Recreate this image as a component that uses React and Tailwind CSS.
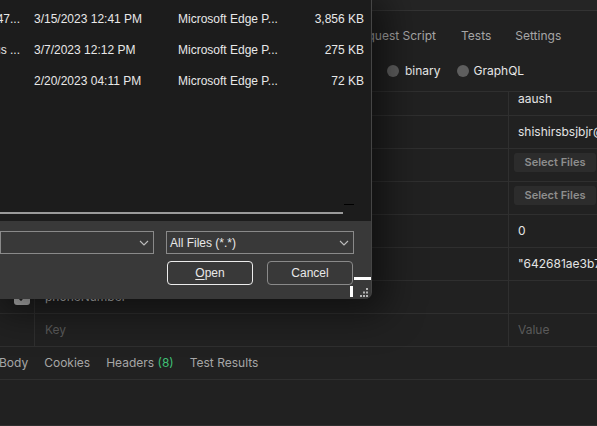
const files = [
  { name: "ashish_resume_v2_final 2023-03-15 1247...", date: "3/15/2023 12:41 PM", type: "Microsoft Edge P...", size: "3,856 KB" },
  { name: "Internship offer letter status ...", date: "3/7/2023 12:12 PM", type: "Microsoft Edge P...", size: "275 KB" },
  { name: "", date: "2/20/2023 04:11 PM", type: "Microsoft Edge P...", size: "72 KB" },
];

function Chevron() {
  return (
    <svg width="10" height="6" viewBox="0 0 10 6" fill="none">
      <path d="M1 1l4 4 4-4" stroke="#bdbdbd" strokeWidth="1.1" />
    </svg>
  );
}

function Grip() {
  return (
    <svg width="10" height="10" viewBox="0 0 10 10" fill="#b5b5b5">
      <rect x="7" y="0" width="2" height="2" />
      <rect x="4" y="3.5" width="2" height="2" />
      <rect x="7" y="3.5" width="2" height="2" />
      <rect x="1" y="7" width="2" height="2" />
      <rect x="4" y="7" width="2" height="2" />
      <rect x="7" y="7" width="2" height="2" />
    </svg>
  );
}

function Row({ h = "h-[33px]", check, keyCell, value, top }) {
  return (
    <div className={`grid grid-cols-[35px_474px_88px] border-b border-[#2f2f2f] ${h}`}>
      <div className="flex items-center border-r border-[#2f2f2f] pl-[14px]">{check}</div>
      <div className="flex items-center border-r border-[#2f2f2f] pl-[10px]">{keyCell}</div>
      <div
        className={
          top
            ? "flex items-start overflow-hidden whitespace-nowrap pt-[4px]"
            : "flex items-center overflow-hidden whitespace-nowrap"
        }
      >
        {value}
      </div>
    </div>
  );
}

function SelectFiles() {
  return (
    <div className="ml-[5px] flex h-[19px] w-[82px] shrink-0 items-center justify-center rounded-[3px] bg-[#2c2c2c] text-[11px] font-semibold text-[#8e8e8e]">
      Select Files
    </div>
  );
}

function PostmanPane() {
  return (
    <div className="text-[12px] text-[#e4e4e4]">
      <div className="h-[11px] border-b border-[#333333] bg-[#252525]" />

      {/* request tabs */}
      <div className="flex h-[49px] items-center whitespace-nowrap text-[#a6a6a6]">
        <div className="flex w-[436px] justify-end overflow-hidden">
          <span className="shrink-0">Pre-request Script</span>
        </div>
        <span className="ml-[25px]">Tests</span>
        <span className="ml-[24px]">Settings</span>
      </div>

      {/* body types */}
      <div className="flex h-[22px] items-center pl-[387px] whitespace-nowrap">
        <span className="h-[12px] w-[12px] rounded-full bg-[#5e5e5e]" />
        <span className="ml-[6px] text-[#e6e6e6]">binary</span>
        <span className="ml-[16px] h-[12px] w-[12px] rounded-full bg-[#5e5e5e]" />
        <span className="ml-[5px] text-[#e6e6e6]">GraphQL</span>
      </div>
      <div className="h-[9px]" />

      {/* form-data table */}
      <div className="border-t border-[#2f2f2f]">
        <div className="grid h-[24px] grid-cols-[35px_474px_88px] border-b border-[#2f2f2f]">
          <div className="border-r border-[#2f2f2f]" />
          <div className="border-r border-[#2f2f2f]" />
          <div className="pl-[9px] leading-[14px]">aaush</div>
        </div>
        <Row value={<span className="pl-[9px]">shishirsbsjbjr@gmail.com</span>} />
        <Row top value={<SelectFiles />} />
        <Row top value={<SelectFiles />} />
        <Row value={<span className="pl-[9px]">0</span>} />
        <Row value={<span className="pl-[9px]">"642681ae3b7c1f0d9a2e4b10"</span>} />
        <Row
          check={
            <span className="flex h-[16px] w-[16px] items-center justify-center rounded-[3px] bg-[#b9b9b9]">
              <svg width="10" height="8" viewBox="0 0 10 8" fill="none">
                <path d="M1 4l3 3 5-6" stroke="#2a2a2a" strokeWidth="1.6" />
              </svg>
            </span>
          }
          keyCell={<span className="text-[#bdbdbd]">phoneNumber</span>}
        />
        <Row
          keyCell={<span className="text-[#5a5a5a]">Key</span>}
          value={<span className="pl-[9px] text-[#5a5a5a]">Value</span>}
        />
      </div>

      {/* response tabs */}
      <div className="flex h-[33px] items-center gap-[16px] border-b border-[#2f2f2f] whitespace-nowrap text-[#a6a6a6]">
        <span className="-ml-[1px]">Body</span>
        <span>Cookies</span>
        <span>
          Headers <span className="text-[#3fbf74]">(8)</span>
        </span>
        <span>Test Results</span>
      </div>
      <div className="h-[46px] border-b border-[#2f2f2f]" />
    </div>
  );
}

function FileDialog() {
  return (
    <div className="absolute left-0 top-0 flex h-[299px] w-[372px] flex-col overflow-hidden rounded-br-[7px] border-r border-[#454545] bg-[#393939] font-['Liberation_Sans',Arial,sans-serif] text-[12px] text-[#e8e8e8] shadow-[6px_6px_36px_8px_rgba(0,0,0,0.5)]">
      {/* file list */}
      <div className="flex h-[221px] flex-col bg-[#1c1c1c] pt-[3px]">
        {files.map((f) => (
          <div key={f.date} className="flex h-[31px] items-center whitespace-nowrap">
            <div className="flex w-[20px] justify-end overflow-hidden">
              <span className="shrink-0">{f.name}</span>
            </div>
            <span className="ml-[14px] w-[144px]">{f.date}</span>
            <span className="w-[120px]">{f.type}</span>
            <span className="w-[66px] text-right">{f.size}</span>
          </div>
        ))}
        <div className="flex-1" />
        <div className="ml-[344px] h-px w-[10px] bg-black" />
        <div className="mt-[7px] h-[2px] w-[343px] bg-[#9a9a9a]" />
        <div className="h-[7px]" />
      </div>

      {/* bottom panel */}
      <div className="relative flex-1">
        <div className="mt-[10px] flex h-[23px]">
          <div className="flex w-[154px] items-center justify-end border border-[#8a8a8a] pr-[4px]">
            <Chevron />
          </div>
          <div className="ml-[12px] flex w-[188px] items-center justify-between border border-[#8a8a8a] pl-[3px] pr-[4px]">
            <span>All Files (*.*)</span>
            <Chevron />
          </div>
        </div>
        <div className="mt-[7px] flex h-[24px]">
          <div className="ml-[167px] flex w-[86px] items-center justify-center rounded-[4px] border-[1.5px] border-[#ececec]">
            <span>
              <span className="underline underline-offset-2">O</span>pen
            </span>
          </div>
          <div className="ml-[14px] flex w-[86px] items-center justify-center rounded-[4px] border border-[#8a8a8a]">
            Cancel
          </div>
        </div>

        {/* stray focus marks + size grip */}
        <div className="absolute left-[354px] top-[56px] h-[3px] w-[18px] bg-white" />
        <div className="absolute left-[350px] top-[65px] h-[11px] w-[3px] bg-white" />
        <div className="absolute left-[359px] top-[67px]">
          <Grip />
        </div>
      </div>
    </div>
  );
}

export default function App() {
  return (
    <div className="relative h-[426px] w-[597px] overflow-hidden bg-[#212121] font-['Inter',sans-serif]">
      <PostmanPane />
      <FileDialog />
    </div>
  );
}
